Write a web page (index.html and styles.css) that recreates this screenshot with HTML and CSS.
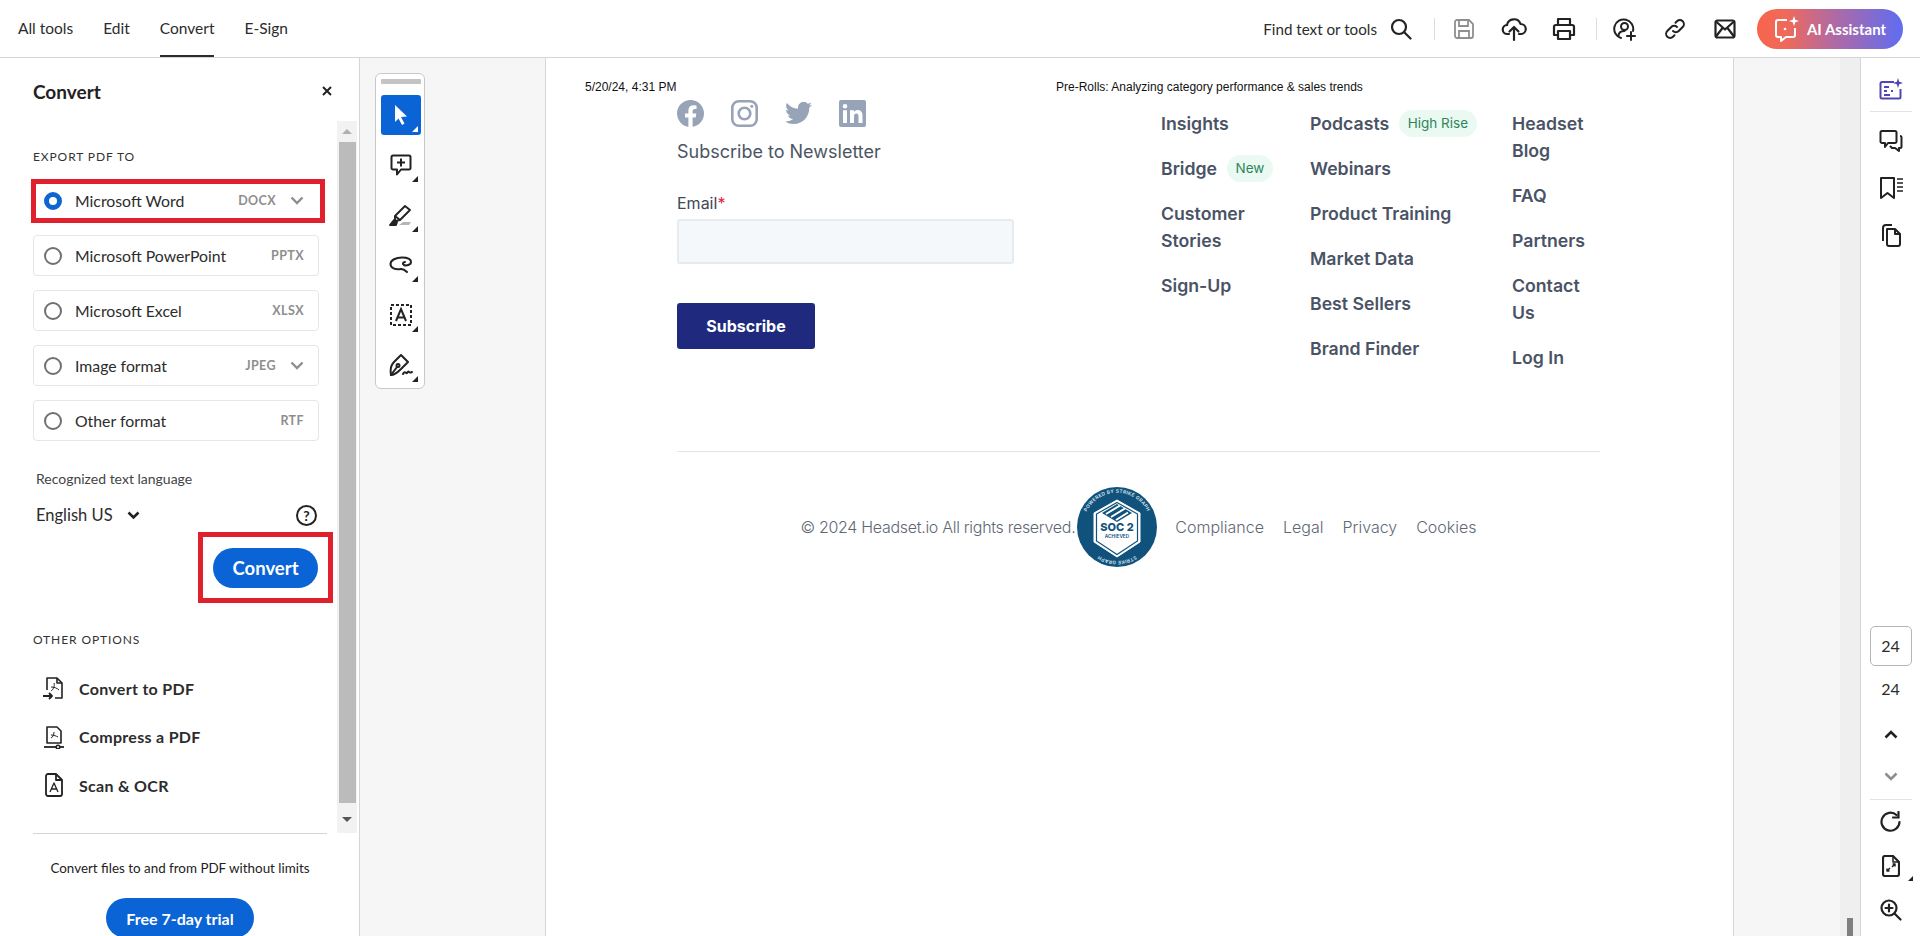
FILE: index.html
```html
<!DOCTYPE html>
<html lang="en">
  <head>
    <meta charset="UTF-8" />
    <meta name="viewport" content="width=device-width, initial-scale=1.0" />
    <link rel="stylesheet" href="styles.css">
    <title>Convert PDF</title>
  </head>
  <body>
    <header class="topbar">
      <nav class="topbar__tabs">
        <a class="topbar__tab" href="#">All tools</a>
        <a class="topbar__tab" href="#">Edit</a>
        <a class="topbar__tab topbar__tab--on" href="#">Convert</a>
        <a class="topbar__tab" href="#">E-Sign</a>
      </nav>
      <div class="topbar__right">
        <span class="topbar__find">Find text or tools</span>
        <svg class="topbar__search" width="22" height="22" viewBox="0 0 22 22" fill="none" stroke="#222" stroke-width="2.2"><circle cx="9" cy="9" r="7"/><path d="M14 14l6.5 6.5" stroke-linecap="round"/></svg>
        <i class="topbar__sep topbar__sep--a"></i>
        <button class="topbar__btn">
          <svg width="22" height="22" viewBox="0 0 22 22" fill="none" stroke="#8f8f8f" stroke-width="1.8"><path d="M4 2h12l4 4v12a2 2 0 0 1-2 2H4a2 2 0 0 1-2-2V4a2 2 0 0 1 2-2z"/><path d="M6 2v6h9V2M6 20v-7h10v7"/></svg>
        </button>
        <button class="topbar__btn">
          <svg width="26" height="26" viewBox="0 0 26 26" fill="none" stroke="#222" stroke-width="2.2" stroke-linecap="round" stroke-linejoin="round"><path d="M8 18H6.500a4.500 4.500 0 0 1-.5-9A7 7 0 0 1 19.500 8a5 5 0 0 1 .5 10h-2"/><path d="M13 24V11M8.500 15.500L13 11l4.500 4.500"/></svg>
        </button>
        <button class="topbar__btn">
          <svg width="24" height="24" viewBox="0 0 24 24" fill="none" stroke="#222" stroke-width="2.2" stroke-linejoin="round"><path d="M6 8V2h12v6"/><path d="M6 18H2V10a2 2 0 0 1 2-2h16a2 2 0 0 1 2 2v8h-4"/><path d="M6 14h12v8H6z"/></svg>
        </button>
        <i class="topbar__sep topbar__sep--b"></i>
        <button class="topbar__btn">
          <svg width="24" height="24" viewBox="0 0 24 24" fill="none" stroke="#222" stroke-width="2" stroke-linecap="round"><path d="M8 21a9.500 9.500 0 1 1 12-7"/><circle cx="11.500" cy="9.500" r="3.500"/><path d="M5.500 19c0-3 2-5 6-5M18 15v8M14 19h8" /></svg>
        </button>
        <button class="topbar__btn">
          <svg width="22" height="22" viewBox="0 0 22 22" fill="none" stroke="#222" stroke-width="2" stroke-linecap="round"><path d="M9 13a4 4 0 0 0 5.700 0l4-4a4 4 0 0 0-5.700-5.700l-1.500 1.500"/><path d="M13 9a4 4 0 0 0-5.700 0l-4 4A4 4 0 0 0 9 18.700l1.500-1.500"/></svg>
        </button>
        <button class="topbar__btn">
          <svg width="22" height="20" viewBox="0 0 22 20" fill="none" stroke="#222" stroke-width="2.200" stroke-linejoin="round"><rect x="1.500" y="1.500" width="19" height="17" rx="2"/><path d="M2 2.500l9 8 9-8M2 17.500l6.500-8.500M20 17.500L13.500 9"/></svg>
        </button>
        <button class="topbar__ai">
          <svg width="26" height="28" viewBox="0 0 26 28" fill="none" stroke="#fff" stroke-width="2" stroke-linejoin="round"><path d="M13 5H4a2 2 0 0 0-2 2v13a2 2 0 0 0 2 2h3v4l5-4h7a2 2 0 0 0 2-2v-7"/><circle cx="11" cy="14" r="1.300" fill="#fff" stroke="none"/><path d="M20 1l1.300 3.700L25 6l-3.700 1.300L20 11l-1.300-3.700L15 6l3.700-1.300z" fill="#fff" stroke="none"/></svg>
          <span>AI Assistant</span>
        </button>
      </div>
    </header>

    <main class="app">
      <aside class="panel">
        <div class="panel__head">
          <h2 class="panel__title">Convert</h2>
          <svg width="10" height="10" viewBox="0 0 10 10" stroke="#222" stroke-width="2"><path d="M1 1l8 8M9 1l-8 8"/></svg>
        </div>
        <div class="panel__scroller">
          <div class="panel__body">
            <h3 class="panel__label">EXPORT PDF TO</h3>
            <div class="formats">
              <label class="format format--on">
                <i class="format__radio format__radio--on"></i>
                <span class="format__name">Microsoft Word</span>
                <span class="format__ext">DOCX</span>
                <svg class="format__chev" width="14" height="9" viewBox="0 0 14 9" fill="none" stroke="#8e8e8e" stroke-width="2.400"><path d="M1.500 1.500L7 7l5.500-5.500"/></svg>
              </label>
              <label class="format">
                <i class="format__radio"></i>
                <span class="format__name">Microsoft PowerPoint</span>
                <span class="format__ext">PPTX</span>
              </label>
              <label class="format">
                <i class="format__radio"></i>
                <span class="format__name">Microsoft Excel</span>
                <span class="format__ext">XLSX</span>
              </label>
              <label class="format">
                <i class="format__radio"></i>
                <span class="format__name">Image format</span>
                <span class="format__ext">JPEG</span>
                <svg class="format__chev" width="14" height="9" viewBox="0 0 14 9" fill="none" stroke="#8e8e8e" stroke-width="2.400"><path d="M1.500 1.500L7 7l5.500-5.500"/></svg>
              </label>
              <label class="format">
                <i class="format__radio"></i>
                <span class="format__name">Other format</span>
                <span class="format__ext">RTF</span>
              </label>
            </div>
            <div class="lang__label">Recognized text language</div>
            <div class="lang">
              <span class="lang__value">English US</span>
              <svg width="13" height="9" viewBox="0 0 13 9" fill="none" stroke="#222" stroke-width="2.600"><path d="M1.500 1.500l5 5 5-5"/></svg>
              <span class="lang__help">?</span>
            </div>
            <div class="convert">
              <button class="pill pill--convert">Convert</button>
            </div>
            <h3 class="panel__label panel__label--other">OTHER OPTIONS</h3>
            <ul class="others">
              <li class="others__item">
                <svg width="22" height="24" viewBox="0 0 22 24" fill="none" stroke="#222" stroke-width="1.600" stroke-linejoin="round"><path d="M4 14V2h10l5 5v15h-7"/><path d="M14 2v5h5"/><path d="M8 15c2-1 4-5 3-8M8 11c3 0 6 1 8 3" stroke-width="1"/><path d="M0 20h9M6 17l3 3-3 3" stroke-width="1.800"/></svg>
                <span>Convert to PDF</span>
              </li>
              <li class="others__item">
                <svg width="22" height="24" viewBox="0 0 22 24" fill="none" stroke="#222" stroke-width="1.600" stroke-linejoin="round"><path d="M4 18V2h10l4 4v12z"/><path d="M8 13c2-1 3-3 3-6M8 10c3 0 5 1 7 2" stroke-width="1"/><path d="M1 22h20" stroke-width="1.800"/><circle cx="15" cy="22" r="1.800" fill="#fff"/></svg>
                <span>Compress a PDF</span>
              </li>
              <li class="others__item">
                <svg width="22" height="24" viewBox="0 0 22 24" fill="none" stroke="#222" stroke-width="1.800" stroke-linejoin="round"><path d="M5 1h8l6 6v14a2 2 0 0 1-2 2H5a2 2 0 0 1-2-2V3a2 2 0 0 1 2-2z"/><path d="M13 1v6h6"/><path d="M7 19l4-9 4 9M8.500 16h5" stroke-width="1.300"/></svg>
                <span>Scan &amp; OCR</span>
              </li>
            </ul>
          </div>
          <div class="scrollbar">
            <i class="scrollbar__up"></i>
            <div class="scrollbar__thumb"></div>
            <i class="scrollbar__down"></i>
          </div>
        </div>
        <div class="panel__foot">
          <p class="panel__promo">Convert files to and from PDF without limits</p>
          <button class="pill pill--trial">Free 7-day trial</button>
        </div>
      </aside>

      <div class="toolarea">
        <div class="tools">
          <div class="tools__grip"></div>
          <button class="tool tool--on">
            <svg width="18" height="22" viewBox="0 0 18 22" fill="#fff"><path d="M3 1l12 11.500-6 .5 3.500 6.500-2.500 1.500-3.500-6.500L3 18z"/></svg>
          </button>
          <button class="tool">
            <svg width="22" height="22" viewBox="0 0 22 22" fill="none" stroke="#222" stroke-width="2" stroke-linejoin="round"><path d="M3 1.500h16a1.500 1.500 0 0 1 1.500 1.500v11a1.500 1.500 0 0 1-1.500 1.500h-8l-4 5v-5H3A1.500 1.500 0 0 1 1.500 14V3A1.500 1.500 0 0 1 3 1.500z"/><path d="M11 4.500v8M7 8.500h8"/></svg>
          </button>
          <button class="tool">
            <svg width="24" height="22" viewBox="0 0 24 22" fill="none" stroke="#222" stroke-width="1.900" stroke-linejoin="round"><path d="M6 12L16 2l5 4-10 10-5 1z"/><path d="M6 12l5 4"/><path d="M1 21l4-5 3 2-1 3z" fill="#222"/><path d="M10 21l4-3h8l-2 3z" fill="#b5b5b5" stroke="none"/></svg>
          </button>
          <button class="tool">
            <svg width="24" height="18" viewBox="0 0 24 18" fill="none" stroke="#222" stroke-width="2" stroke-linecap="round"><path d="M12 13C6 14 1.500 12 1.500 8S7 1.500 13 1.500 22 3 22 6s-5 4-7 3-1-3 1-3"/><path d="M12 13c2 0 4 1 6 3"/></svg>
          </button>
          <button class="tool">
            <svg width="24" height="24" viewBox="0 0 24 24" fill="none" stroke="#222" stroke-width="2"><rect x="2" y="2" width="20" height="20" stroke-dasharray="3 2"/><path d="M7 18l5-12 5 12M8.500 14.500h7"/></svg>
          </button>
          <button class="tool">
            <svg width="24" height="24" viewBox="0 0 24 24" fill="none" stroke="#222" stroke-width="2" stroke-linejoin="round" stroke-linecap="round"><path d="M2 22c-1-6 0-10 3-13l7-7 7 7-7 7c-3 3-6 6-10 6z"/><path d="M2 22l6-8"/><circle cx="9" cy="12.500" r="1.500"/><path d="M14 21c2-4 3 0 4-1s1-2 2-1 1 1 3 0"/></svg>
          </button>
        </div>
      </div>

      <section class="page">
        <div class="page__meta">
          <span class="page__date">5/20/24, 4:31 PM</span>
          <span>Pre-Rolls: Analyzing category performance &amp; sales trends</span>
        </div>
        <div class="site">
          <div class="site__top">
            <div class="news">
              <div class="social">
                <svg width="27" height="27" viewBox="0 0 27 27"><path fill="#97a3b6" d="M27 13.500a13.500 13.500 0 1 0-15.600 13.300v-9.400H8v-3.900h3.400v-3c0-3.400 2-5.200 5.100-5.200 1.500 0 3 .3 3 .3v3.300h-1.700c-1.700 0-2.200 1-2.200 2.100v2.500h3.700l-.6 3.900h-3.100v9.400A13.500 13.500 0 0 0 27 13.500z"/></svg>
                <svg width="27" height="27" viewBox="0 0 27 27" fill="none" stroke="#97a3b6" stroke-width="2.600"><rect x="1.300" y="1.300" width="24.400" height="24.400" rx="6.500"/><circle cx="13.500" cy="13.500" r="5.800"/><circle cx="20.800" cy="6.200" r="1.500" fill="#97a3b6" stroke="none"/></svg>
                <svg width="27" height="23" viewBox="0 0 27 23"><path fill="#97a3b6" d="M27 2.700a11 11 0 0 1-3.200.9A5.500 5.500 0 0 0 26.200.5a11 11 0 0 1-3.500 1.300 5.500 5.500 0 0 0-9.500 5A15.700 15.700 0 0 1 1.900 1a5.500 5.500 0 0 0 1.700 7.400 5.500 5.500 0 0 1-2.500-.7v.1a5.500 5.500 0 0 0 4.400 5.400 5.500 5.500 0 0 1-2.500.1 5.500 5.500 0 0 0 5.200 3.800A11 11 0 0 1 0 19.400 15.600 15.600 0 0 0 8.500 22c10.200 0 15.800-8.500 15.800-15.800v-.7A11 11 0 0 0 27 2.700z"/></svg>
                <svg width="27" height="27" viewBox="0 0 27 27"><path fill="#97a3b6" fill-rule="evenodd" d="M2 0h23a2 2 0 0 1 2 2v23a2 2 0 0 1-2 2H2a2 2 0 0 1-2-2V2a2 2 0 0 1 2-2zm2 10.200V23h4V10.200zM6 4a2.300 2.300 0 1 0 0 4.600A2.300 2.300 0 0 0 6 4zm5 6.200V23h4v-6.600c0-1.700.7-3 2.400-3 1.600 0 2.100 1.300 2.100 3V23h4v-7.500c0-3.500-1.900-5.600-4.800-5.600-1.800 0-3 .9-3.700 2v-1.700z"/></svg>
              </div>
              <h4 class="news__title">Subscribe to Newsletter</h4>
              <label class="news__label">Email<b>*</b></label>
              <div class="news__input"></div>
              <button class="news__submit">Subscribe</button>
            </div>
            <ul class="links links--a">
              <li>Insights</li>
              <li>Bridge <span class="tag tag--new">New</span></li>
              <li>Customer<br>Stories</li>
              <li>Sign-Up</li>
            </ul>
            <ul class="links links--b">
              <li>Podcasts <span class="tag">High Rise</span></li>
              <li>Webinars</li>
              <li>Product Training</li>
              <li>Market Data</li>
              <li>Best Sellers</li>
              <li>Brand Finder</li>
            </ul>
            <ul class="links links--c">
              <li>Headset<br>Blog</li>
              <li>FAQ</li>
              <li>Partners</li>
              <li>Contact<br>Us</li>
              <li>Log In</li>
            </ul>
          </div>
          <div class="legal">
            <span class="legal__copy">© 2024 Headset.io All rights reserved.</span>
            <svg class="legal__badge" width="80" height="80" viewBox="0 0 80 80">
              <defs>
                <path id="ring-top" d="M6.500 34A34 34 0 0 1 73.500 34"/>
                <path id="ring-low" d="M71 54A34 34 0 0 1 9 54"/>
              </defs>
              <circle cx="40" cy="40" r="40" fill="#11527c"/>
              <text class="legal__ring" fill="#dfe9ef"><textPath href="#ring-top" startOffset="50%" text-anchor="middle">POWERED BY STRIKE GRAPH</textPath></text>
              <text class="legal__ring" fill="#dfe9ef"><textPath href="#ring-low" startOffset="50%" text-anchor="middle">STRIKE GRAPH</textPath></text>
              <path d="M40 13l23 13v29L40 70 17 55V26z" fill="#fff" stroke="#fff" stroke-width="1"/>
              <path d="M40 15.500l20.500 11.500v27L40 67.500 19.500 54V27z" fill="#fff" stroke="#11527c" stroke-width="1.200"/>
              <path d="M25 26l15-9 15 9-15 9z" fill="#11527c"/>
              <path d="M29 27l14-8.500M34 30l14-8.500M39 33l12-7.500" stroke="#fff" stroke-width="2"/>
              <text x="40" y="44" text-anchor="middle" class="legal__soc" fill="#11527c">SOC 2</text>
              <text x="40" y="51" text-anchor="middle" class="legal__ach" fill="#11527c">ACHIEVED</text>
            </svg>
            <span class="legal__links">
              <a href="#">Compliance</a>
              <a href="#">Legal</a>
              <a href="#">Privacy</a>
              <a href="#">Cookies</a>
            </span>
          </div>
        </div>
      </section>

      <div class="gutter">
        <div class="gutter__track"><i class="gutter__thumb"></i></div>
      </div>

      <aside class="rail">
        <button class="rail__btn">
          <svg width="24" height="22" viewBox="0 0 24 22" fill="none" stroke="#4f46b5" stroke-width="2" stroke-linejoin="round"><path d="M15 4H3a1.500 1.500 0 0 0-1.500 1.500V19A1.500 1.500 0 0 0 3 20.500h17a1.500 1.500 0 0 0 1.500-1.500v-8"/><path d="M5 9h5M5 13h3M12 13h2M5 17h6" stroke-width="1.800"/><path d="M19 0l1.200 3.800L24 5l-3.800 1.200L19 10l-1.200-3.800L14 5l3.800-1.200z" fill="#4f46b5" stroke="none"/></svg>
        </button>
        <i class="rail__line"></i>
        <button class="rail__btn">
          <svg width="24" height="24" viewBox="0 0 24 24" fill="none" stroke="#222" stroke-width="2" stroke-linejoin="round"><path d="M3 2h13a1.500 1.500 0 0 1 1.500 1.500v9A1.500 1.500 0 0 1 16 14H9l-3 4v-4H3a1.500 1.500 0 0 1-1.500-1.500v-9A1.500 1.500 0 0 1 3 2z"/><path d="M21 7c1 0 1.500.5 1.500 1.500v9c0 1-.5 1.500-1.500 1.500h-1v3l-4-3h-3l-2-2"/></svg>
        </button>
        <button class="rail__btn">
          <svg width="24" height="22" viewBox="0 0 24 22" fill="none" stroke="#222" stroke-width="2" stroke-linejoin="round"><path d="M2 1h13v20l-6.500-5L2 21z"/><path d="M18 2h6M18 6h6M18 10h6M18 14h6" stroke-width="1.600"/></svg>
        </button>
        <button class="rail__btn rail__btn--pages">
          <svg width="21" height="23" viewBox="0 0 21 23" fill="none" stroke="#222" stroke-width="2" stroke-linejoin="round"><path d="M7 5h8l5 5v10a2 2 0 0 1-2 2H9a2 2 0 0 1-2-2z"/><path d="M15 5v5h5"/><path d="M3 17V4a3 3 0 0 1 3-3h6"/></svg>
        </button>
        <div class="rail__bottom">
          <div class="rail__page">24</div>
          <div class="rail__total">24</div>
          <button class="rail__nav">
            <svg width="14" height="9" viewBox="0 0 14 9" fill="none" stroke="#222" stroke-width="2.600"><path d="M1.500 7.500L7 2l5.500 5.500"/></svg>
          </button>
          <button class="rail__nav">
            <svg width="14" height="9" viewBox="0 0 14 9" fill="none" stroke="#8e8e8e" stroke-width="2.600"><path d="M1.500 1.500L7 7l5.500-5.500"/></svg>
          </button>
          <i class="rail__line rail__line--low"></i>
          <button class="rail__btn rail__btn--low">
            <svg width="22" height="22" viewBox="0 0 22 22" fill="none" stroke="#222" stroke-width="2.200" stroke-linecap="round"><path d="M19.500 11a9 9 0 1 1-3-7"/><path d="M18.500 1v5.500H13"/></svg>
          </button>
          <button class="rail__btn rail__btn--low rail__btn--more">
            <svg width="18" height="22" viewBox="0 0 18 22" fill="none" stroke="#222" stroke-width="2.200" stroke-linejoin="round"><path d="M3 1h8l6 6v12a2 2 0 0 1-2 2H3a2 2 0 0 1-2-2V3a2 2 0 0 1 2-2z"/><path d="M11 1v6h6" stroke-width="1.500"/><path d="M8 13l-3 3M5 13.500V16h2.500M10 12l3-3M10.500 9H13v2.500" stroke-width="1.500"/></svg>
          </button>
          <button class="rail__btn rail__btn--low">
            <svg width="22" height="22" viewBox="0 0 22 22" fill="none" stroke="#222" stroke-width="2.200" stroke-linecap="round"><circle cx="9" cy="9" r="7.500"/><path d="M14.500 14.500l6 6M9 5.500v7M5.500 9h7"/></svg>
          </button>
        </div>
      </aside>
    </main>
  </body>
</html>
```

FILE: styles.css
```css
*,
*::before,
*::after {
  margin: 0;
  padding: 0;
  box-sizing: border-box;
}

html,
body {
  height: 936px;
  overflow: hidden;
}

body {
  font-family: "Lato", "Noto Sans", sans-serif;
  color: #2c2c2c;
  background: #fff;
  display: flex;
  flex-direction: column;
}

button {
  border: 0;
  background: none;
  font-family: inherit;
  display: flex;
  align-items: center;
  justify-content: center;
}

a {
  color: inherit;
  text-decoration: none;
}

ul {
  list-style: none;
}

i {
  display: block;
}

/* top bar */
.topbar {
  height: 58px;
  flex: none;
  display: flex;
  justify-content: space-between;
  border-bottom: 1px solid #d5d5d5;
}

.topbar__tabs {
  display: flex;
  gap: 30px;
  padding-left: 18px;
}

.topbar__tab {
  height: 57px;
  font-size: 15.5px;
  line-height: 57px;
  color: #2c2c2c;
}

.topbar__tab--on {
  border-bottom: 2px solid #2c2c2c;
}

.topbar__right {
  display: flex;
  align-items: center;
  padding-right: 17px;
}

.topbar__find {
  font-size: 15.2px;
}

.topbar__search {
  margin-left: 13px;
}

.topbar__sep {
  width: 1px;
  height: 22px;
  background: #ddd;
}

.topbar__sep--a {
  margin: 0 4px 0 22px;
}

.topbar__sep--b {
  margin: 0 3px 0 7px;
}

.topbar__btn {
  width: 50px;
  height: 40px;
}

.topbar__ai {
  width: 146px;
  height: 40px;
  margin-left: 7px;
  gap: 7px;
  border-radius: 20px;
  background: linear-gradient(90deg, #f7654c 0%, #f0695a 20%, #b56a9e 50%, #5f6cf2 100%);
  color: #fff;
  font-size: 15px;
  font-weight: 700;
}

/* layout */
.app {
  flex: 1;
  min-height: 0;
  display: flex;
}

/* left panel */
.panel {
  width: 360px;
  flex: none;
  border-right: 1px solid #d5d5d5;
  display: flex;
  flex-direction: column;
}

.panel__head {
  height: 63px;
  flex: none;
  padding: 3px 27px 0 33px;
  display: flex;
  align-items: center;
  justify-content: space-between;
}

.panel__title {
  font-size: 19px;
  font-weight: 700;
  color: #222;
}

.panel__scroller {
  height: 712px;
  flex: none;
  display: flex;
  padding-right: 2px;
}

.panel__body {
  width: 337px;
  padding: 28px 18px 0 33px;
}

.panel__label {
  font-size: 12px;
  line-height: 16px;
  font-weight: 400;
  letter-spacing: 0.9px;
  color: #333;
}

.formats {
  margin-top: 15px;
  display: flex;
  flex-direction: column;
  gap: 14px;
}

.format {
  position: relative;
  height: 41px;
  padding: 0 14px 0 10px;
  display: flex;
  align-items: center;
  border: 1px solid #e6e6e6;
  border-radius: 4px;
}

/* red annotation drawn over the screenshot */
.format--on {
  border-color: transparent;
}

.format--on::after {
  content: "";
  position: absolute;
  top: -2px;
  bottom: -3px;
  left: -3px;
  right: -7px;
  border: 5px solid #e1202e;
}

.format__radio {
  width: 18px;
  height: 18px;
  flex: none;
  border: 2px solid #707070;
  border-radius: 50%;
}

.format__radio--on {
  border: 5px solid #0d66d0;
}

.format__name {
  margin-left: 13px;
  font-size: 15.8px;
  color: #2c2c2c;
}

.format__ext {
  margin-left: auto;
  font-size: 12.5px;
  font-weight: 700;
  letter-spacing: 0.4px;
  color: #8e8e8e;
}

.format__chev {
  margin-left: 14px;
}

.lang__label {
  margin-top: 29px;
  padding-left: 3px;
  font-size: 14px;
  line-height: 18px;
  color: #444;
}

.lang {
  margin-top: 15px;
  height: 24px;
  padding: 0 2px 0 3px;
  display: flex;
  align-items: center;
  gap: 14px;
}

.lang__value {
  font-size: 16.5px;
}

.lang__help {
  margin-left: auto;
  width: 21px;
  height: 21px;
  border: 2px solid #222;
  border-radius: 50%;
  font-size: 14px;
  font-weight: 700;
  line-height: 17px;
  text-align: center;
  color: #222;
}

.convert {
  position: relative;
  margin-top: 21px;
  padding-right: 1px;
  display: flex;
  justify-content: flex-end;
}

.convert::after {
  content: "";
  position: absolute;
  top: -16px;
  bottom: -15px;
  right: -14px;
  width: 135px;
  border: 5px solid #e1202e;
}

.pill {
  height: 40px;
  border-radius: 20px;
  background: #0a64d6;
  color: #fff;
  font-size: 16px;
  font-weight: 700;
}

.pill--convert {
  width: 105px;
  font-size: 18.5px;
}

.pill--trial {
  width: 148px;
  flex: none;
  margin-top: 20px;
}

.panel__label--other {
  margin-top: 44px;
}

.others {
  margin-top: 16px;
}

.others__item {
  height: 48.5px;
  padding-left: 10px;
  display: flex;
  align-items: center;
  gap: 14px;
  font-size: 16px;
  font-weight: 700;
  letter-spacing: 0.3px;
  color: #2c2c2c;
}

.scrollbar {
  width: 20px;
  flex: none;
  background: #f2f2f2;
  display: flex;
  flex-direction: column;
  align-items: center;
}

.scrollbar__up,
.scrollbar__down {
  width: 0;
  height: 0;
  flex: none;
  border-left: 5px solid transparent;
  border-right: 5px solid transparent;
}

.scrollbar__up {
  margin: 8px 0 8px;
  border-bottom: 5px solid #b0b0b0;
}

.scrollbar__down {
  margin-top: 14px;
  border-top: 5px solid #555;
}

.scrollbar__thumb {
  width: 17px;
  height: 661px;
  flex: none;
  background: #bbb;
}

.panel__foot {
  flex: none;
  margin: 0 32px 0 33px;
  padding-top: 24px;
  border-top: 1px solid #d5d5d5;
  display: flex;
  flex-direction: column;
  align-items: center;
}

.panel__promo {
  font-size: 13.4px;
  line-height: 20px;
  color: #222;
}

/* floating tools */
.toolarea {
  width: 186px;
  flex: none;
  padding: 15px 0 0 15px;
  background: #f6f6f6;
  border-right: 1px solid #d5d5d5;
}

.tools {
  width: 50px;
  height: 316px;
  padding: 5px 4px 0 5px;
  background: #fff;
  border: 1px solid #c9c9c9;
  border-radius: 6px;
  display: flex;
  flex-direction: column;
  align-items: center;
}

.tools__grip {
  width: 40px;
  height: 5px;
  flex: none;
  margin-bottom: 11px;
  background: #c4c4c4;
  border-radius: 1px;
}

.tool {
  position: relative;
  width: 40px;
  height: 40px;
  flex: none;
  margin-bottom: 10px;
  border-radius: 3px;
}

.tool::after {
  content: "";
  position: absolute;
  right: 3px;
  bottom: 3px;
  border-left: 6px solid transparent;
  border-bottom: 6px solid #222;
}

.tool--on {
  background: #0a64d6;
}

.tool--on::after {
  border-bottom-color: #fff;
}

/* document page */
.page {
  width: 1187px;
  flex: none;
  background: #fff;
  font-family: "Inter", "Liberation Sans", sans-serif;
}

.page__meta {
  padding: 22px 0 0 39px;
  display: flex;
  font-family: "Liberation Sans", sans-serif;
  font-size: 12px;
  line-height: 14px;
  color: #111;
}

.page__date {
  width: 471px;
}

.site {
  margin: 6px 0 0 131px;
  width: 923px;
}

.site__top {
  height: 352px;
  display: flex;
  border-bottom: 1px solid #dfe3e8;
}

.news {
  width: 484px;
  flex: none;
}

.social {
  display: flex;
  align-items: center;
  gap: 27px;
}

.news__title {
  margin-top: 13px;
  font-size: 18px;
  line-height: 24px;
  font-weight: 400;
  color: #4b5563;
}

.news__label {
  display: block;
  margin-top: 27px;
  font-size: 16px;
  line-height: 24px;
  color: #3f4854;
}

.news__label b {
  font-weight: 400;
  color: #e0223a;
}

.news__input {
  margin-top: 4px;
  width: 337px;
  height: 45px;
  background: #f5f8fa;
  border: 2px solid #e6ebf0;
  border-radius: 3px;
}

.news__submit {
  margin-top: 39px;
  width: 138px;
  height: 46px;
  background: #1f2a7f;
  border-radius: 3px;
  color: #fff;
  font-size: 16px;
  font-weight: 700;
}

.links {
  padding-top: 10px;
  display: flex;
  flex-direction: column;
  gap: 18px;
  font-size: 17.7px;
  line-height: 27px;
  font-weight: 600;
  color: #4a5365;
}

.links li {
  display: block;
}

.links--a {
  width: 149px;
  flex: none;
}

.links--b {
  width: 202px;
  flex: none;
}

.tag {
  display: inline-block;
  margin-left: 5px;
  padding: 0 9px;
  height: 27px;
  border-radius: 14px;
  background: #eafaf2;
  font-size: 13.5px;
  line-height: 26px;
  font-weight: 400;
  color: #2f855a;
  vertical-align: top;
}

.legal {
  height: 150px;
  padding-top: 35px;
  padding-bottom: 35px;
  display: flex;
  justify-content: center;
  align-items: center;
  font-size: 16px;
  font-weight: 300;
  color: #5f6875;
}

.legal__copy {
  letter-spacing: -0.3px;
  margin-right: 2px;
}

.legal__badge {
  flex: none;
}

.legal__ring {
  font-size: 4.8px;
  letter-spacing: 0.3px;
  font-weight: 600;
}

.legal__soc {
  font-size: 11px;
  font-weight: 800;
}

.legal__ach {
  font-size: 4.8px;
  font-weight: 600;
}

.legal__links {
  margin-left: 18px;
  display: flex;
  gap: 19px;
}

/* grey strip right of the page */
.gutter {
  flex: 1;
  min-width: 0;
  background: #f6f6f6;
  border-left: 1px solid #d5d5d5;
  display: flex;
  justify-content: flex-end;
}

.gutter__track {
  width: 20px;
  background: #efefef;
  display: flex;
  flex-direction: column;
  justify-content: flex-end;
  align-items: center;
}

.gutter__thumb {
  width: 6px;
  height: 18px;
  background: #7f7f7f;
}

/* right rail */
.rail {
  width: 60px;
  flex: none;
  padding-top: 7px;
  border-left: 1px solid #d5d5d5;
  display: flex;
  flex-direction: column;
  align-items: center;
}

.rail__btn {
  width: 100%;
  height: 47px;
  flex: none;
}

.rail__btn--pages {
  margin-top: 1px;
}

.rail__line {
  width: 42px;
  height: 1px;
  flex: none;
  margin: -1px 0 5px;
  background: #e3e3e3;
}

.rail__bottom {
  margin-top: auto;
  padding-bottom: 4px;
  width: 100%;
  display: flex;
  flex-direction: column;
  align-items: center;
}

.rail__page {
  width: 42px;
  height: 40px;
  flex: none;
  border: 1px solid #b5b5b5;
  border-radius: 5px;
  font-size: 16px;
  line-height: 38px;
  text-align: center;
}

.rail__total {
  margin-top: 11px;
  font-size: 16px;
  line-height: 24px;
}

.rail__nav {
  width: 100%;
  height: 42px;
  flex: none;
}

.rail__nav:first-of-type {
  margin-top: 12px;
}

.rail__line--low {
  margin: 2px 0 0;
}

.rail__btn--low {
  position: relative;
  height: 44px;
}

.rail__btn--more::after {
  content: "";
  position: absolute;
  right: 7px;
  bottom: 7px;
  border-left: 5px solid transparent;
  border-bottom: 5px solid #222;
}
```
